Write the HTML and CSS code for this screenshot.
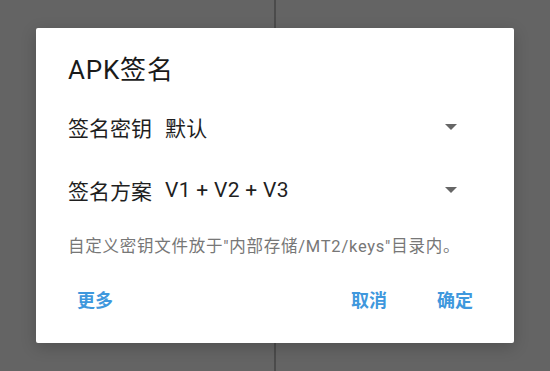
FILE: index.html
```html
<!DOCTYPE html>
<html>
  <head>
    <meta name="viewport" content="width=device-width, initial-scale=1.0" />
    <link rel="stylesheet" href="styles.css">
  </head>
  <body>
    <div class="backdrop">
      <div class="divider"></div>
      <div class="dialog">
        <div class="dialog-title">APK签名</div>

        <div class="field">
          <div class="field-label">签名密钥</div>
          <div class="field-value">默认</div>
          <div class="field-arrow"></div>
        </div>

        <div class="field">
          <div class="field-label">签名方案</div>
          <div class="field-value">V1 + V2 + V3</div>
          <div class="field-arrow"></div>
        </div>

        <div class="dialog-hint">自定义密钥文件放于"内部存储/MT2/keys"目录内。</div>

        <div class="dialog-actions">
          <div class="action">更多</div>
          <div class="actions-right">
            <div class="action">取消</div>
            <div class="action">确定</div>
          </div>
        </div>
      </div>
    </div>
  </body>
</html>
```

FILE: styles.css
```css
* {
  margin: 0;
  padding: 0;
  box-sizing: border-box;
}

body {
  margin: 0;
  background-color: #646464;
  font-family: Roboto, "Noto Sans CJK SC", sans-serif;
  overflow: hidden;
}

.backdrop {
  position: relative;
  width: 100vw;
  height: 100vh;
  display: flex;
  align-items: center;
  justify-content: center;
}

/* split line of the activity behind the dim layer */
.divider {
  position: absolute;
  top: 0;
  bottom: 0;
  left: 274px;
  width: 2px;
  background: #4b4b4b;
}

.dialog {
  position: relative;
  width: 478px;
  height: 315px;
  background: #ffffff;
  border-radius: 2px;
  padding: 27px 32px 24px;
  display: flex;
  flex-direction: column;
  box-shadow: 0 4px 16px rgba(0, 0, 0, 0.2);
}

.dialog-title {
  height: 30px;
  line-height: 30px;
  font-size: 26px;
  letter-spacing: 0.8px;
  color: #1a1a1a;
}

.field {
  height: 64px;
  display: flex;
  align-items: center;
  font-size: 21px;
  color: #1f1f1f;
}

.dialog-title + .field {
  margin-top: 10px;
}

.field-value {
  flex: 1;
  margin-left: 13px;
  letter-spacing: 0.3px;
}

.field-arrow {
  width: 0;
  height: 0;
  margin-right: 25px;
  border-left: 6px solid transparent;
  border-right: 6px solid transparent;
  border-top: 6px solid #666666;
}

.dialog-hint {
  margin-top: 14px;
  height: 22px;
  line-height: 22px;
  font-size: 16.5px;
  letter-spacing: 0.75px;
  color: #777777;
}

.dialog-actions {
  margin-top: 25px;
  height: 36px;
  display: flex;
  justify-content: space-between;
  align-items: center;
}

.actions-right {
  display: flex;
  gap: 32px;
}

.action {
  padding: 0 9px;
  line-height: 36px;
  font-size: 18px;
  font-weight: 600;
  color: #3f98dd;
}
```
